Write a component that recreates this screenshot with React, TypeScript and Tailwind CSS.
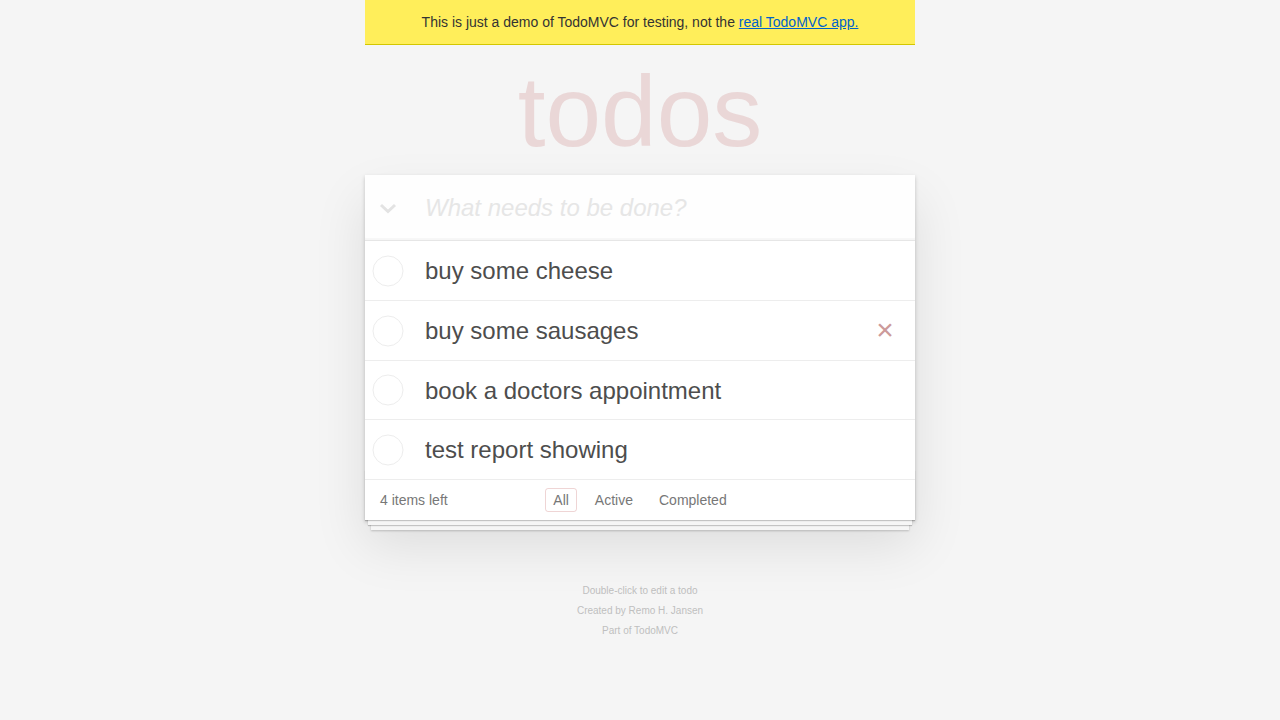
const todos = [
  { id: 1, title: 'buy some cheese' },
  { id: 2, title: 'buy some sausages', hovered: true },
  { id: 3, title: 'book a doctors appointment' },
  { id: 4, title: 'test report showing' },
];

function Circle() {
  return (
    <svg width="32" height="32" viewBox="0 0 32 32" className="shrink-0">
      <circle cx="16" cy="16" r="15" fill="none" stroke="#ededed" strokeWidth="1" />
    </svg>
  );
}

export default function App() {
  return (
    <div className="min-h-[720px] bg-[#f5f5f5] font-['Liberation_Sans',Arial,sans-serif] text-[14px] leading-[1.4] text-[#4d4d4d]">
      <div className="mx-auto max-w-[550px]">
        {/* Demo banner */}
        <div className="flex h-[45px] items-center justify-center border-b border-[#d3c700] bg-[#ffee5a] pt-[1px] text-[14px] text-[#333]">
          <span>
            This is just a demo of TodoMVC for testing, not the{' '}
            <a href="#" className="text-[#0062cc] underline">real TodoMVC app.</a>
          </span>
        </div>

        <h1 className="mt-[16px] text-center text-[100px] leading-[100px] text-[rgba(175,47,47,0.15)]">todos</h1>

        <section className="relative mt-[14px] bg-white shadow-[0_2px_4px_0_rgba(0,0,0,0.2),0_25px_50px_0_rgba(0,0,0,0.1)]">
          {/* New todo */}
          <div className="flex h-[65px] items-center bg-[rgba(0,0,0,0.003)] shadow-[inset_0_-2px_1px_rgba(0,0,0,0.03)]">
            <div className="flex w-[60px] pl-[14px] pt-[2px]">
              <svg width="18" height="11" viewBox="0 0 18 11">
                <path d="M2 2 L9 8.5 L16 2" fill="none" stroke="#e3e3e3" strokeWidth="3" />
              </svg>
            </div>
            <span className="text-[24px] italic text-[#e6e6e6]">What needs to be done?</span>
          </div>

          {/* List */}
          <ul className="border-t border-[#e6e6e6]">
            {todos.map((todo) => (
              <li key={todo.id} className="flex items-center border-b border-[#ededed] text-[24px]">
                <div className="flex w-[60px] items-center pl-[7px] pt-[1px]">
                  <Circle />
                </div>
                <label className="flex-1 pt-[16px] pb-[14px] leading-[1.2]">{todo.title}</label>
                {todo.hovered && (
                  <span className="mr-[10px] flex h-[40px] w-[40px] items-center justify-center text-[30px] leading-none text-[#cc9a9a]">
                    ×
                  </span>
                )}
              </li>
            ))}
          </ul>

          {/* Footer */}
          <footer className="relative grid h-[40px] grid-cols-[1fr_auto_1fr] items-center px-[15px] text-[14px] text-[#777] before:absolute before:inset-x-0 before:bottom-0 before:h-[50px] before:overflow-hidden before:content-[''] before:shadow-[0_1px_1px_rgba(0,0,0,0.2),0_8px_0_-3px_#f6f6f6,0_9px_1px_-3px_rgba(0,0,0,0.2),0_16px_0_-6px_#f6f6f6,0_17px_2px_-6px_rgba(0,0,0,0.2)]">
            <span className="relative pt-[2px]">4 items left</span>
            <ul className="relative flex gap-[4px]">
              <li>
                <a href="#" className="m-[3px] block rounded-[3px] border border-[rgba(175,47,47,0.2)] px-[7px] py-[3px] leading-[16px]">All</a>
              </li>
              <li>
                <a href="#" className="m-[3px] block rounded-[3px] border border-transparent px-[7px] py-[3px] leading-[16px]">Active</a>
              </li>
              <li>
                <a href="#" className="m-[3px] block rounded-[3px] border border-transparent px-[7px] py-[3px] leading-[16px]">Completed</a>
              </li>
            </ul>
            <span />
          </footer>
        </section>

        {/* Info */}
        <footer className="mt-[61px] text-center text-[10px] leading-[20px] text-[#bfbfbf]">
          <p>Double-click to edit a todo</p>
          <p>Created by Remo H. Jansen</p>
          <p>Part of TodoMVC</p>
        </footer>
      </div>
    </div>
  );
}
